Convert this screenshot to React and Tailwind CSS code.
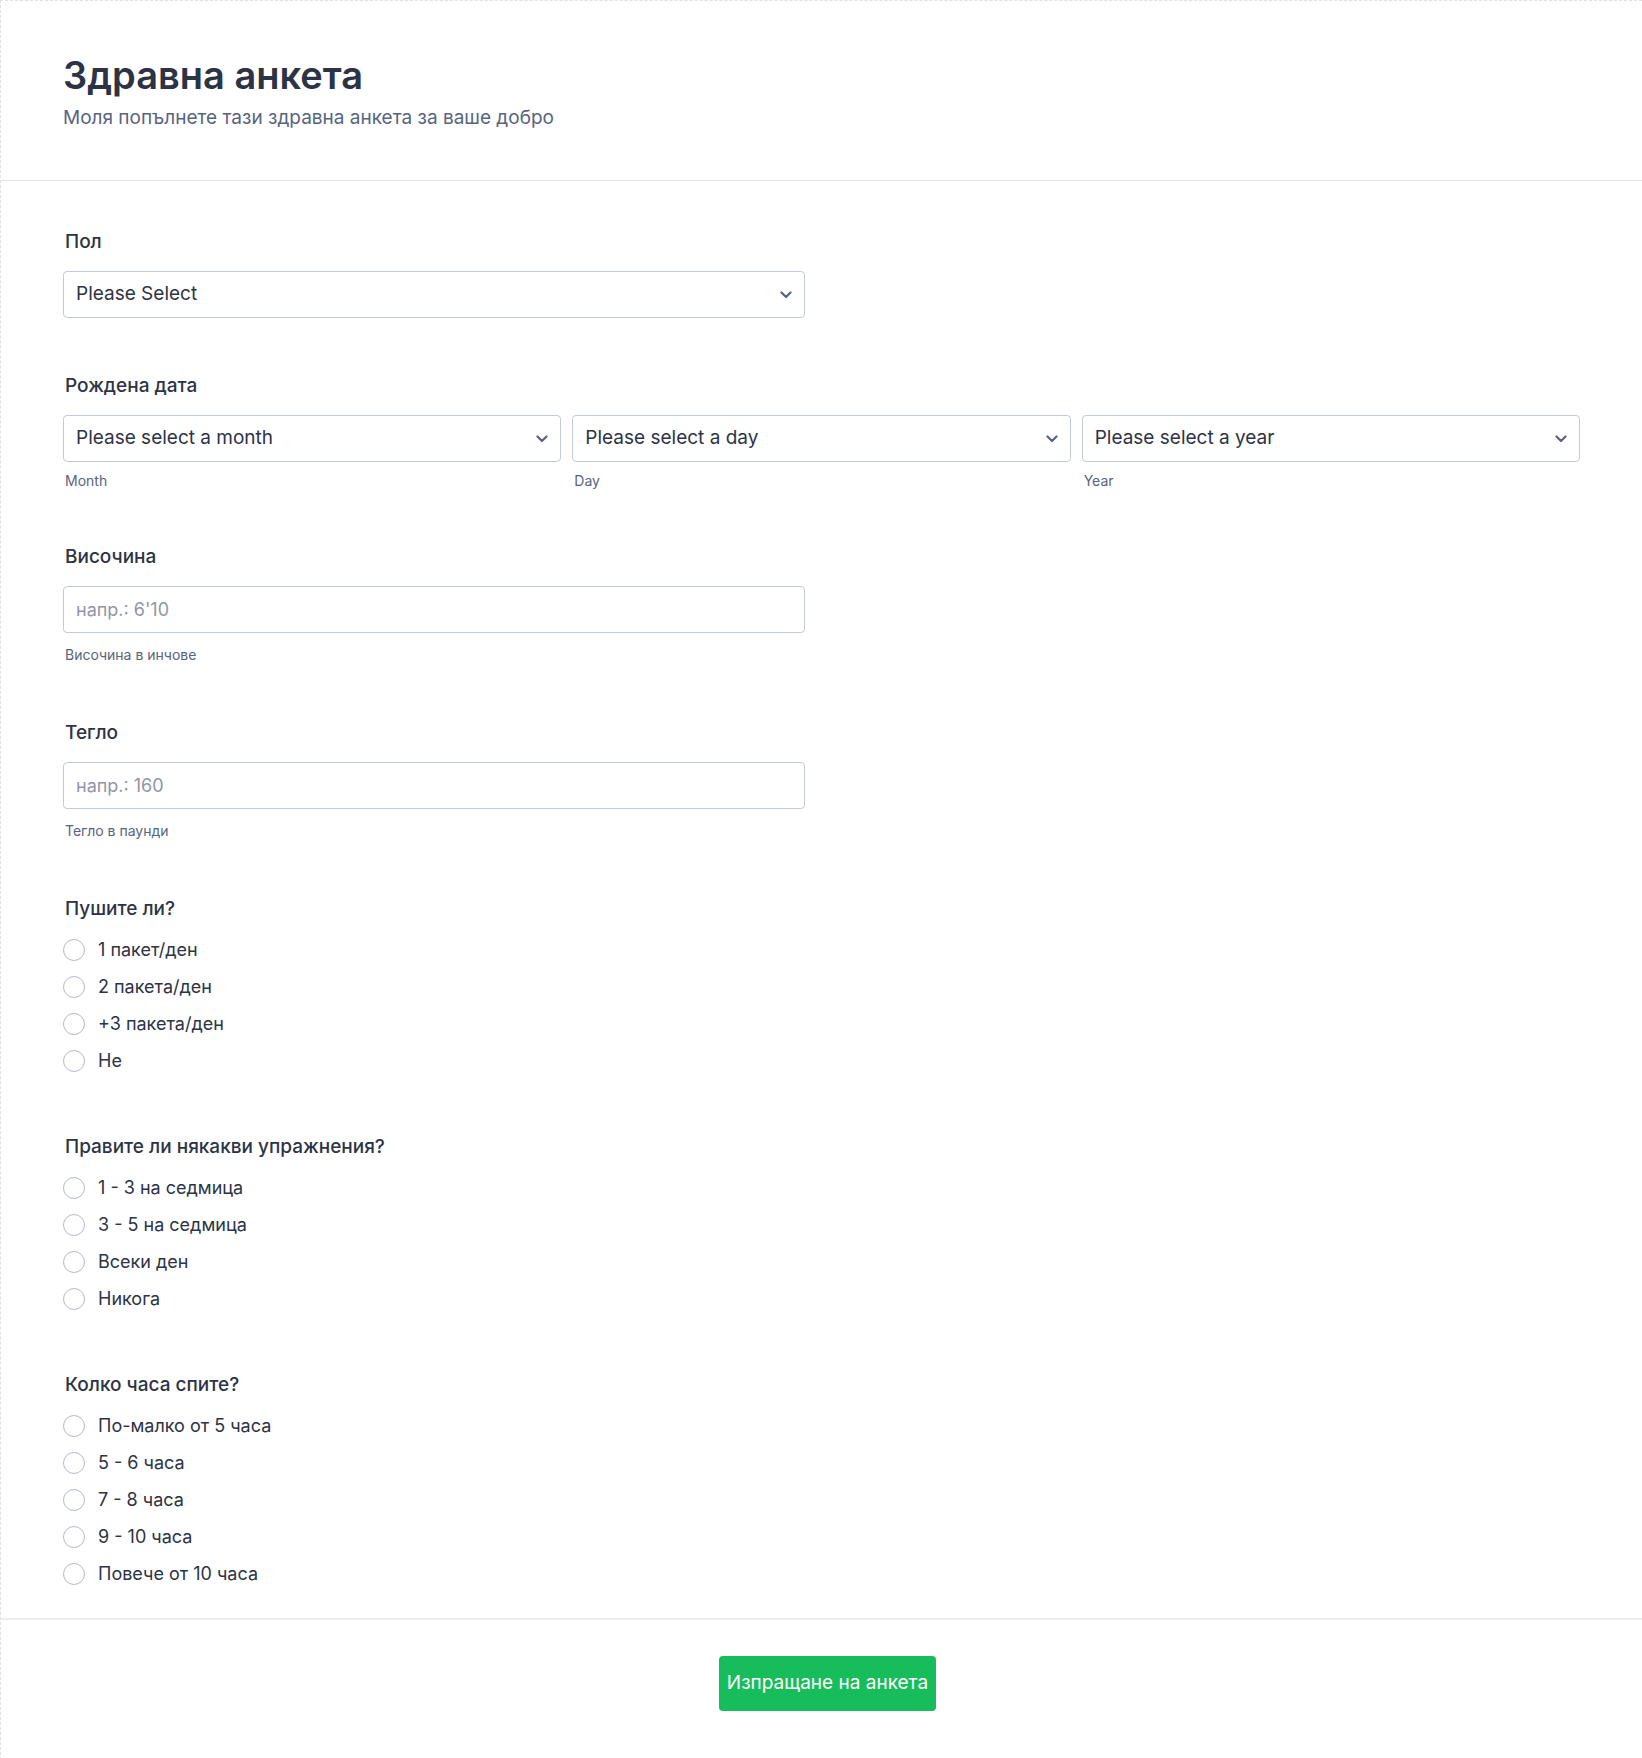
import React from "react";

const Chevron = () => (
  <svg width="12" height="8" viewBox="0 0 12 8" fill="none" className="shrink-0">
    <path d="M1.5 1.5 L6 6 L10.5 1.5" stroke="#57647e" strokeWidth="2.2" strokeLinecap="round" strokeLinejoin="round" />
  </svg>
);

const Select = ({ text, className = "" }) => (
  <div className={`h-[47px] flex items-center justify-between pl-[12px] pr-[12px] border border-[#c3cad8] rounded-[4px] bg-white ${className}`}>
    <span className="text-[19px] text-[#2c3345]">{text}</span>
    <Chevron />
  </div>
);

const Label = ({ children }) => (
  <div className="h-[24px] leading-[24px] text-[19px] font-medium text-[#2c3345] mb-[17px] pl-[2px]">{children}</div>
);

const Radio = ({ text }) => (
  <div className="h-[37px] flex items-center gap-[13px]">
    <div className="w-[22px] h-[22px] rounded-full border border-[#b3bac8] bg-white" />
    <span className="text-[18px] text-[#2c3345]">{text}</span>
  </div>
);

const RadioGroup = ({ label, options, last }) => (
  <div className={last ? "" : "mb-[56px]"}>
    <div className="h-[24px] leading-[24px] text-[19px] font-medium text-[#2c3345] mb-[10px] pl-[2px]">{label}</div>
    {options.map((o) => (
      <Radio key={o} text={o} />
    ))}
  </div>
);

export default function App() {
  return (
    <div
      className="min-h-[1758px] bg-white border-l border-t border-dashed border-[#dfe1e6]"
      style={{ fontFamily: "Inter, 'Noto Sans', sans-serif" }}
    >
      <div className="px-[62px] pt-[50px] pb-[48px] border-b border-[#e3e5ec]">
        <h1 className="text-[38px] leading-[48px] font-semibold text-[#2c3345]">Здравна анкета</h1>
        <p className="mt-[5px] text-[19px] leading-[28px] text-[#57647e]">Моля попълнете тази здравна анкета за ваше добро</p>
      </div>

      <div className="px-[62px] pt-[49px] pb-[26px]">
        <div className="mb-[56px]">
          <Label>Пол</Label>
          <Select text="Please Select" className="w-[742px]" />
        </div>

        <div className="mb-[54px]">
          <Label>Рождена дата</Label>
          <div className="grid grid-cols-3 gap-[11px]">
            <div>
              <Select text="Please select a month" />
              <div className="mt-[9px] h-[20px] leading-[20px] text-[14px] text-[#57647e] pl-[2px]">Month</div>
            </div>
            <div>
              <Select text="Please select a day" />
              <div className="mt-[9px] h-[20px] leading-[20px] text-[14px] text-[#57647e] pl-[2px]">Day</div>
            </div>
            <div>
              <Select text="Please select a year" />
              <div className="mt-[9px] h-[20px] leading-[20px] text-[14px] text-[#57647e] pl-[2px]">Year</div>
            </div>
          </div>
        </div>

        <div className="mb-[56px]">
          <Label>Височина</Label>
          <div className="w-[742px] h-[47px] flex items-center px-[12px] border border-[#c3cad8] rounded-[4px]">
            <span className="text-[18px] text-[#8f96a8]">напр.: 6'10</span>
          </div>
          <div className="mt-[12px] h-[20px] leading-[20px] text-[14px] text-[#57647e] pl-[2px]">Височина в инчове</div>
        </div>

        <div className="mb-[56px]">
          <Label>Тегло</Label>
          <div className="w-[742px] h-[47px] flex items-center px-[12px] border border-[#c3cad8] rounded-[4px]">
            <span className="text-[18px] text-[#8f96a8]">напр.: 160</span>
          </div>
          <div className="mt-[12px] h-[20px] leading-[20px] text-[14px] text-[#57647e] pl-[2px]">Тегло в паунди</div>
        </div>

        <RadioGroup label="Пушите ли?" options={["1 пакет/ден", "2 пакета/ден", "+3 пакета/ден", "Не"]} />
        <RadioGroup
          label="Правите ли някакви упражнения?"
          options={["1 - 3 на седмица", "3 - 5 на седмица", "Всеки ден", "Никога"]}
        />
        <RadioGroup
          label="Колко часа спите?"
          options={["По-малко от 5 часа", "5 - 6 часа", "7 - 8 часа", "9 - 10 часа", "Повече от 10 часа"]}
          last
        />
      </div>

      <div className="border-t-2 border-[#ececf2] pt-[36px] pb-[49px] pl-[12px] flex justify-center">
        <button className="h-[55px] px-[8px] rounded-[4px] bg-[#18bd5b] text-white text-[19px] font-normal">
          Изпращане на анкета
        </button>
      </div>
    </div>
  );
}
